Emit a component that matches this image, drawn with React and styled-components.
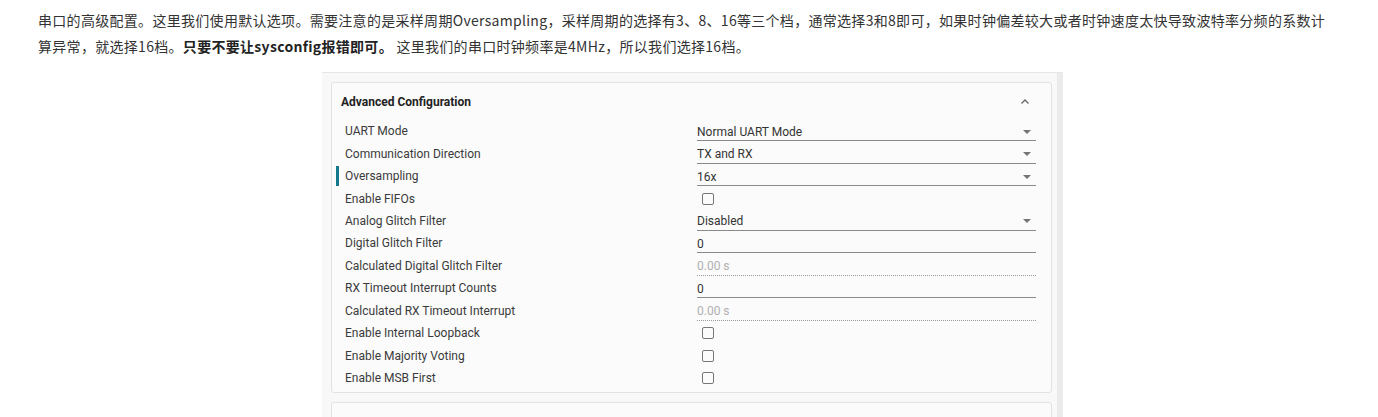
import React from "react";
import styled, { createGlobalStyle } from "styled-components";

const Global = createGlobalStyle`
  html, body { margin: 0; padding: 0; background: #fff; }
  body { font-family: "Noto Sans CJK SC", "Noto Sans", sans-serif; }
`;

const Page = styled.div`
  padding: 7px 0 0 38px;
`;

const Para = styled.p`
  margin: 0;
  width: 1300px;
  font-size: 14px;
  line-height: 26px;
  letter-spacing: 0.3px;
  color: #333;
  font-family: "Noto Sans CJK SC", "Noto Sans", sans-serif;
  b { font-weight: 700; color: #222; }
`;

const Shot = styled.div`
  margin: 13px 0 0 284px;
  width: 741px;
  height: 360px;
  display: flex;
  background: #f8f8f8;
  border-top: 1px solid #e6e6e6;
  overflow: hidden;
`;

const Content = styled.div`
  flex: 1;
  padding: 9px 5px 0 9px;
  display: flex;
  flex-direction: column;
  gap: 9px;
`;

const Scroll = styled.div`
  width: 6px;
  background: #ebebeb;
`;

const Card = styled.div`
  background: #fbfbfb;
  border: 1px solid #e2e2e2;
  border-radius: 3px;
  padding: 0 15px 3px 13px;
  font-family: Roboto, "Liberation Sans", sans-serif;
  font-size: 12px;
  color: #3a3a3a;
`;

const NextCard = styled(Card)`
  height: 30px;
`;

const Header = styled.div`
  height: 37px;
  display: flex;
  align-items: center;
  justify-content: space-between;
  margin-left: -4px;
  font-weight: 700;
  color: #222;
`;

const Chevron = styled.svg`
  width: 10px;
  height: 10px;
  margin-right: 6px;
`;

const Row = styled.div`
  position: relative;
  height: 22.45px;
  display: grid;
  grid-template-columns: 352px 1fr;
  align-items: center;
`;

const Marker = styled.span`
  position: absolute;
  left: -9px;
  top: 1px;
  bottom: 1px;
  width: 3px;
  background: #13798a;
`;

const Label = styled.div`
  white-space: nowrap;
`;

const Field = styled.div`
  height: 17px;
  display: flex;
  align-items: center;
  justify-content: space-between;
  border-bottom: 1px ${(p) => (p.$dotted ? "dotted #999" : "solid #8a8a8a")};
  color: ${(p) => (p.$muted ? "#b0b0b0" : "#333")};
  padding-top: 2px;
`;

const Arrow = styled.span`
  width: 0;
  height: 0;
  border-left: 4px solid transparent;
  border-right: 4px solid transparent;
  border-top: 4px solid #757575;
  margin-right: 5px;
`;

const Check = styled.span`
  display: block;
  width: 10px;
  height: 10px;
  margin-left: 5px;
  border: 1.5px solid #777;
  border-radius: 2px;
`;

const rows = [
  { label: "UART Mode", type: "select", value: "Normal UART Mode" },
  { label: "Communication Direction", type: "select", value: "TX and RX" },
  { label: "Oversampling", type: "select", value: "16x", active: true },
  { label: "Enable FIFOs", type: "check" },
  { label: "Analog Glitch Filter", type: "select", value: "Disabled" },
  { label: "Digital Glitch Filter", type: "text", value: "0" },
  { label: "Calculated Digital Glitch Filter", type: "calc", value: "0.00 s" },
  { label: "RX Timeout Interrupt Counts", type: "text", value: "0" },
  { label: "Calculated RX Timeout Interrupt", type: "calc", value: "0.00 s" },
  { label: "Enable Internal Loopback", type: "check" },
  { label: "Enable Majority Voting", type: "check" },
  { label: "Enable MSB First", type: "check" },
];

function Control({ r }) {
  if (r.type === "check") return <div><Check /></div>;
  if (r.type === "select")
    return (
      <Field>
        <span>{r.value}</span>
        <Arrow />
      </Field>
    );
  if (r.type === "calc")
    return (
      <Field $dotted $muted>
        <span>{r.value}</span>
      </Field>
    );
  return (
    <Field>
      <span>{r.value}</span>
    </Field>
  );
}

export default function App() {
  return (
    <>
      <Global />
      <Page>
        <Para>
          串口的高级配置。这里我们使用默认选项。需要注意的是采样周期Oversampling，采样周期的选择有3、8、16等三个档，通常选择3和8即可，如果时钟偏差较大或者时钟速度太快导致波特率分频的系数计算异常，就选择16档。<b>只要不要让sysconfig报错即可。</b> 这里我们的串口时钟频率是4MHz，所以我们选择16档。
        </Para>
        <Shot>
          <Content>
            <Card>
              <Header>
                <span>Advanced Configuration</span>
                <Chevron viewBox="0 0 10 10">
                  <path d="M1.5 6.5 L5 3 L8.5 6.5" fill="none" stroke="#666" strokeWidth="1.3" />
                </Chevron>
              </Header>
              {rows.map((r) => (
                <Row key={r.label}>
                  {r.active && <Marker />}
                  <Label>{r.label}</Label>
                  <Control r={r} />
                </Row>
              ))}
            </Card>
            <NextCard />
          </Content>
          <Scroll />
        </Shot>
      </Page>
    </>
  );
}
